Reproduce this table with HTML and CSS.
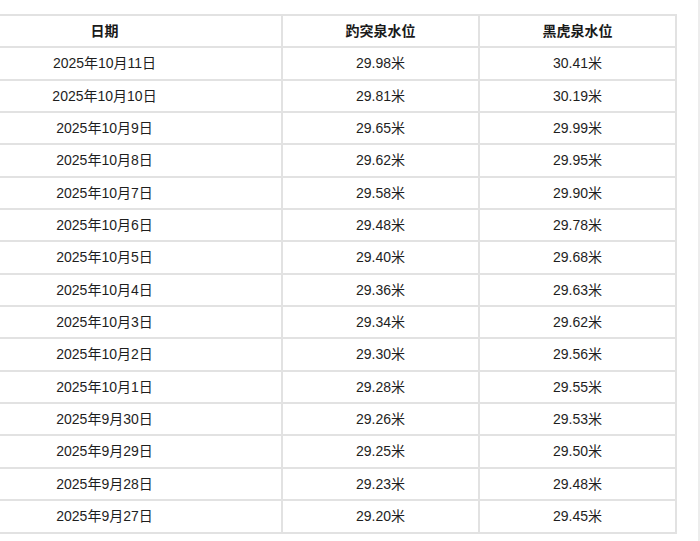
FILE: index.html
```html
<!DOCTYPE html>
<html lang="zh-CN">
<head>
<meta charset="utf-8">
<title>泉水水位</title>
<link rel="stylesheet" href="styles.css">
</head>
<body>
<div class="page">
  <main class="main">
    <table class="levels">
      <colgroup>
        <col class="c-date">
        <col class="c-val">
        <col class="c-val">
      </colgroup>
      <thead>
        <tr><th>日期</th><th>趵突泉水位</th><th>黑虎泉水位</th></tr>
      </thead>
      <tbody>
        <tr><td>2025年10月11日</td><td>29.98米</td><td>30.41米</td></tr>
        <tr><td>2025年10月10日</td><td>29.81米</td><td>30.19米</td></tr>
        <tr><td>2025年10月9日</td><td>29.65米</td><td>29.99米</td></tr>
        <tr><td>2025年10月8日</td><td>29.62米</td><td>29.95米</td></tr>
        <tr><td>2025年10月7日</td><td>29.58米</td><td>29.90米</td></tr>
        <tr><td>2025年10月6日</td><td>29.48米</td><td>29.78米</td></tr>
        <tr><td>2025年10月5日</td><td>29.40米</td><td>29.68米</td></tr>
        <tr><td>2025年10月4日</td><td>29.36米</td><td>29.63米</td></tr>
        <tr><td>2025年10月3日</td><td>29.34米</td><td>29.62米</td></tr>
        <tr><td>2025年10月2日</td><td>29.30米</td><td>29.56米</td></tr>
        <tr><td>2025年10月1日</td><td>29.28米</td><td>29.55米</td></tr>
        <tr><td>2025年9月30日</td><td>29.26米</td><td>29.53米</td></tr>
        <tr><td>2025年9月29日</td><td>29.25米</td><td>29.50米</td></tr>
        <tr><td>2025年9月28日</td><td>29.23米</td><td>29.48米</td></tr>
        <tr><td>2025年9月27日</td><td>29.20米</td><td>29.45米</td></tr>
      </tbody>
    </table>
  </main>
  <div class="edge"></div>
</div>
</body>
</html>
```

FILE: styles.css
```css
html, body {
  margin: 0;
  padding: 0;
  background: #ffffff;
}
body {
  font-family: "Liberation Sans", "Noto Sans CJK SC", sans-serif;
  color: #1e1e1e;
  font-size: 14px;
}
.page {
  display: flex;
  width: 700px;
  height: 541px;
  overflow: hidden;
}
.main {
  flex: 1;
  padding-top: 14px;
  overflow: hidden;
}
.edge {
  width: 2px;
  background: #ededed;
}
.levels {
  margin-left: -74px;
  width: 749px;
  table-layout: fixed;
  border-collapse: collapse;
}
.c-date { width: 355px; }
.c-val { width: 197px; }
.levels th,
.levels td {
  border: 2px solid #e2e2e2;
  padding: 0;
  height: 30.35px;
  line-height: 30.35px;
  text-align: center;
  white-space: nowrap;
}
.levels th {
  font-weight: bold;
  color: #1a1a1a;
}
```
